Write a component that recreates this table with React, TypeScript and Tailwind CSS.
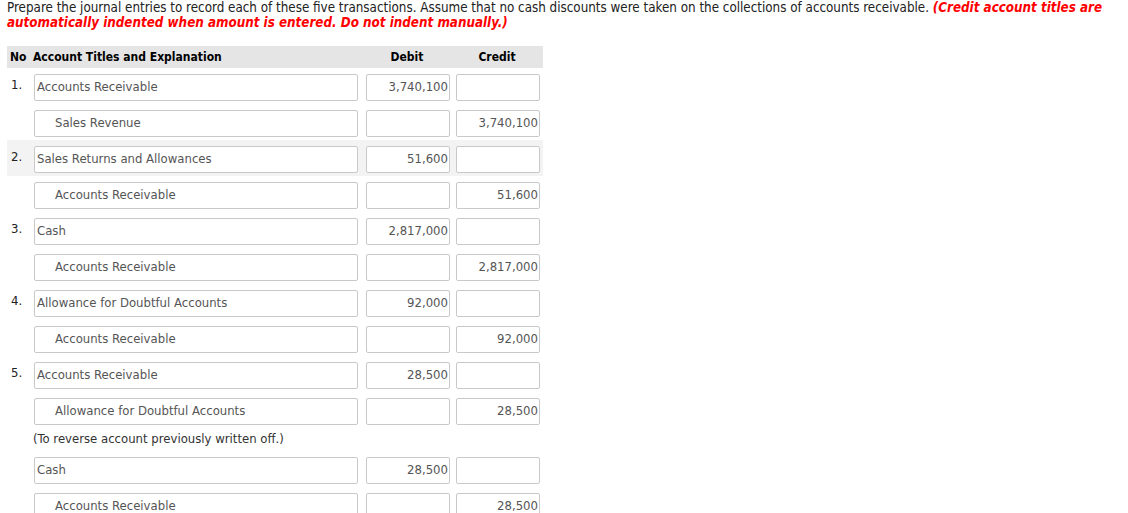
type Line = { account: string; debit?: string; credit?: string; no?: string; indent?: boolean };

const rows: (Line | { note: string })[] = [
  { no: "1.", account: "Accounts Receivable", debit: "3,740,100" },
  { account: "Sales Revenue", credit: "3,740,100", indent: true },
  { no: "2.", account: "Sales Returns and Allowances", debit: "51,600" },
  { account: "Accounts Receivable", credit: "51,600", indent: true },
  { no: "3.", account: "Cash", debit: "2,817,000" },
  { account: "Accounts Receivable", credit: "2,817,000", indent: true },
  { no: "4.", account: "Allowance for Doubtful Accounts", debit: "92,000" },
  { account: "Accounts Receivable", credit: "92,000", indent: true },
  { no: "5.", account: "Accounts Receivable", debit: "28,500" },
  { account: "Allowance for Doubtful Accounts", credit: "28,500", indent: true },
  { note: "(To reverse account previously written off.)" },
  { account: "Cash", debit: "28,500" },
  { account: "Accounts Receivable", credit: "28,500", indent: true },
];

const box =
  "h-[27px] rounded-[2px] border border-[#c9c9c9] bg-white pb-[2px] text-[13px] leading-[23px] text-[#555] outline-none";

function Row({ line, shaded }: { line: Line; shaded: boolean }) {
  return (
    <div className={`flex h-[36px] pt-[6px] ${shaded ? "bg-[#f3f3f3]" : ""}`}>
      <div className="w-[27px] pl-[4px] pt-[3px] text-[13px] leading-[15px] text-[#222]">{line.no}</div>
      <input
        readOnly
        value={line.account}
        className={`${box} w-[324px] ${line.indent ? "pl-[20px]" : "pl-[2px]"}`}
      />
      <input readOnly value={line.debit ?? ""} className={`${box} ml-[8px] w-[84px] pr-[1px] text-right`} />
      <input readOnly value={line.credit ?? ""} className={`${box} ml-[6px] w-[84px] pr-[1px] text-right`} />
    </div>
  );
}

export default function App() {
  return (
    <div
      className="h-[513px] w-[1128px] overflow-hidden bg-white px-[7px] text-[#222]"
      style={{ fontFamily: '"DejaVu Sans Condensed", "DejaVu Sans", sans-serif' }}
    >
      <p className="whitespace-nowrap pt-[1px] text-[13.3px] leading-[14.5px]">
        Prepare the journal entries to record each of these five transactions. Assume that no cash discounts were
        taken on the collections of accounts receivable.{" "}
        <span className="font-bold italic text-[#ff0000]">(Credit account titles are</span>
        <br />
        <span className="font-bold italic text-[#ff0000]">
          automatically indented when amount is entered. Do not indent manually.)
        </span>
      </p>

      <div className="mt-[16px] w-[536px]">
        <div className="flex h-[22px] items-center bg-[#e5e5e5] text-[12px] font-bold text-black">
          <div className="w-[26px] pl-[3px]">No</div>
          <div className="w-[332px]">Account Titles and Explanation</div>
          <div className="w-[84px] text-center">Debit</div>
          <div className="ml-[6px] w-[84px] text-center">Credit</div>
        </div>
        {rows.map((r, i) =>
          "note" in r ? (
            <div key={i} className="h-[23px] pl-[26px] pt-[3px] text-[13px] leading-[15px] text-[#333]">
              {r.note}
            </div>
          ) : (
            <Row key={i} line={r} shaded={i === 2} />
          ),
        )}
      </div>
    </div>
  );
}
